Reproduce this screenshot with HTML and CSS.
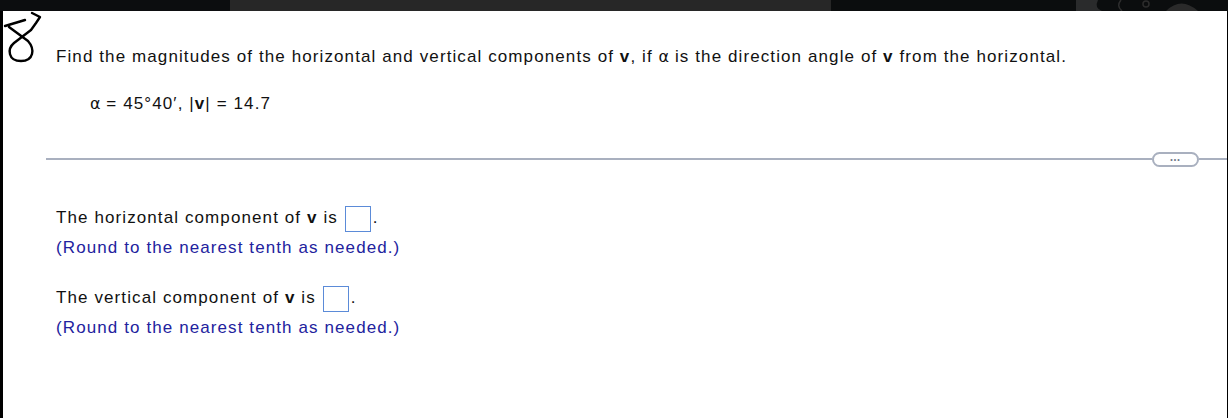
FILE: index.html
```html
<!DOCTYPE html>
<html>
<head>
<meta charset="utf-8">
<link rel="stylesheet" href="styles.css">
</head>
<body>
<div class="topbar">
  <div class="seg seg-a"></div>
  <div class="seg seg-b"></div>
  <div class="seg seg-c">
    <svg class="deco" width="140" height="11" viewBox="0 0 140 11">
      <path d="M0 0 L22 0 Q18 8 26 11 L0 11 Z" fill="#2a2b2c"/>
      <path d="M45 0 Q40 6 46 11" stroke="#2e2e2e" stroke-width="1.5" fill="none"/>
      <circle cx="70" cy="4" r="3" fill="none" stroke="#2c2c2c" stroke-width="1.5"/>
      <path d="M90 11 Q105 -4 122 11 Z" fill="#2a2a2a"/>
    </svg>
  </div>
</div>
<div class="frame">
  <svg class="scribble" width="44" height="52" viewBox="0 0 44 52">
    <path d="M2 15 L22 9 M29 2 L37 6 L33 12 L28 19 L11 32 C4 38 5 50 18 50 C31 50 32 38 25 30 L6 16"
          fill="none" stroke="#000" stroke-width="2.4" stroke-linecap="round" stroke-linejoin="round"/>
  </svg>
  <div class="question">
    <p class="prompt">Find the magnitudes of the horizontal and vertical components of <b>v</b>, if <span class="alpha">α</span> is the direction angle of <b>v</b> from the horizontal.</p>
    <p class="given"><span class="alpha">α</span> = 45°40′, |<b>v</b>| = 14.7</p>
  </div>
  <div class="divider">
    <span class="line"></span>
    <span class="more">•••</span>
    <span class="line tail"></span>
  </div>
  <div class="answers">
    <div class="answer">
      <p class="ask">The horizontal component of <b>v</b> is <span class="box"></span>.</p>
      <p class="hint">(Round to the nearest tenth as needed.)</p>
    </div>
    <div class="answer">
      <p class="ask">The vertical component of <b>v</b> is <span class="box"></span>.</p>
      <p class="hint">(Round to the nearest tenth as needed.)</p>
    </div>
  </div>
</div>
</body>
</html>
```
FILE: styles.css
```css
html, body {
  margin: 0;
  padding: 0;
  background: #000;
}
body {
  width: 1228px;
  height: 418px;
  overflow: hidden;
  font-family: "Liberation Sans", Arial, sans-serif;
  font-size: 17px;
  letter-spacing: 1.1px;
  color: #111;
}
p { margin: 0; }
.topbar {
  display: flex;
  height: 11px;
}
.seg-a { width: 230px; background: #0c0d0f; }
.seg-b { width: 601px; background: #272727; }
.seg-c { flex: 1; background: #0b0d0e; display: flex; justify-content: flex-end; padding-right: 12px; }
.deco { display: block; }
.frame {
  position: relative;
  height: 407px;
  margin-left: 3px;
  margin-right: 1px;
  background: #fff;
}
.scribble {
  position: absolute;
  left: 0;
  top: 0;
}
.question {
  padding: 36px 0 0 53px;
}
.prompt {
  line-height: 20px;
}
.given {
  margin-top: 27px;
  padding-left: 34px;
  line-height: 20px;
}
.alpha { font-family: "DejaVu Sans", sans-serif; font-size: 16px; letter-spacing: 0; }
.divider {
  display: flex;
  align-items: center;
  margin: 38px 0 0 43px;
  height: 14px;
}
.line {
  flex: 1;
  height: 2px;
  background: #a9b0bf;
}
.line.tail { flex: 0 0 28px; }
.more {
  width: 43px;
  height: 11px;
  border: 2px solid #a9b0bf;
  border-radius: 8px;
  font-size: 7px;
  letter-spacing: 1px;
  color: #6d7485;
  display: flex;
  align-items: center;
  justify-content: center;
  line-height: 1;
}
.answers {
  padding: 38px 0 0 53px;
  display: flex;
  flex-direction: column;
  gap: 25px;
}
.ask {
  line-height: 28px;
}
.box {
  display: inline-block;
  width: 24px;
  height: 24px;
  border: 1px solid #5b8bd8;
  vertical-align: middle;
  margin-left: 1px;
  margin-right: 2px;
}
.hint {
  margin-top: 5px;
  color: #22229e;
  line-height: 22px;
}
```
